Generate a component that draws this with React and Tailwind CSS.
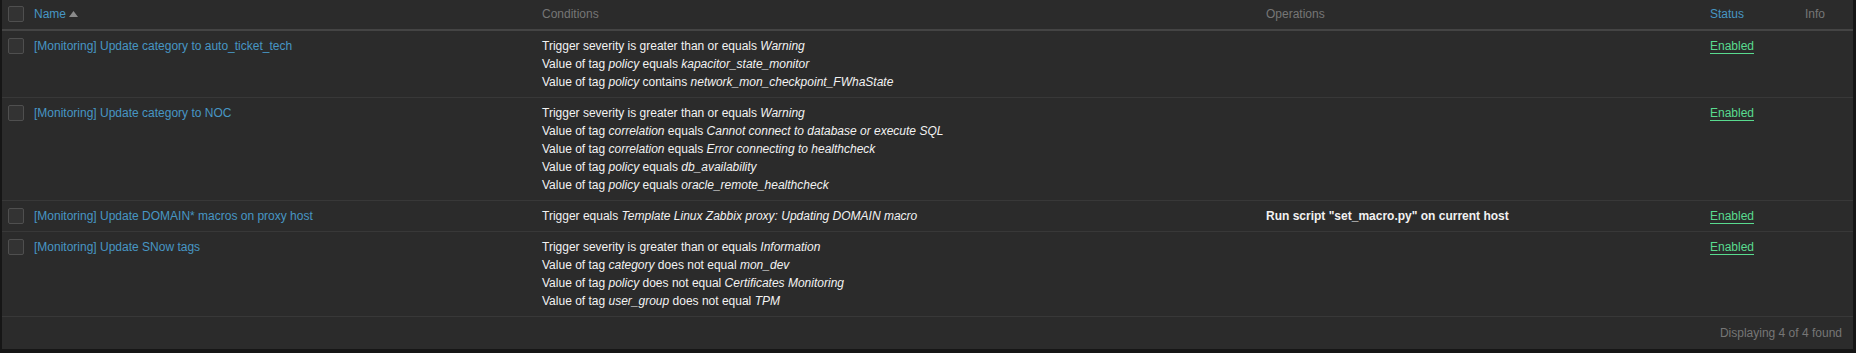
import clsx from 'clsx'

const ROWS = [
  {
    name: '[Monitoring] Update category to auto_ticket_tech',
    conditions: [
      ['Trigger severity is greater than or equals ', <i key="a">Warning</i>],
      ['Value of tag ', <i key="a">policy</i>, ' equals ', <i key="b">kapacitor_state_monitor</i>],
      ['Value of tag ', <i key="a">policy</i>, ' contains ', <i key="b">network_mon_checkpoint_FWhaState</i>],
    ],
    operations: null,
  },
  {
    name: '[Monitoring] Update category to NOC',
    conditions: [
      ['Trigger severity is greater than or equals ', <i key="a">Warning</i>],
      ['Value of tag ', <i key="a">correlation</i>, ' equals ', <i key="b">Cannot connect to database or execute SQL</i>],
      ['Value of tag ', <i key="a">correlation</i>, ' equals ', <i key="b">Error connecting to healthcheck</i>],
      ['Value of tag ', <i key="a">policy</i>, ' equals ', <i key="b">db_availability</i>],
      ['Value of tag ', <i key="a">policy</i>, ' equals ', <i key="b">oracle_remote_healthcheck</i>],
    ],
    operations: null,
  },
  {
    name: '[Monitoring] Update DOMAIN* macros on proxy host',
    conditions: [
      ['Trigger equals ', <i key="a">Template Linux Zabbix proxy: Updating DOMAIN macro</i>],
    ],
    operations: 'Run script "set_macro.py" on current host',
  },
  {
    name: '[Monitoring] Update SNow tags',
    conditions: [
      ['Trigger severity is greater than or equals ', <i key="a">Information</i>],
      ['Value of tag ', <i key="a">category</i>, ' does not equal ', <i key="b">mon_dev</i>],
      ['Value of tag ', <i key="a">policy</i>, ' does not equal ', <i key="b">Certificates Monitoring</i>],
      ['Value of tag ', <i key="a">user_group</i>, ' does not equal ', <i key="b">TPM</i>],
    ],
    operations: null,
  },
]

function Checkbox() {
  return <span className="inline-block align-top mt-[1px] w-4 h-4 rounded-[2px] border border-[#4f4f4f] bg-[#333333]" />
}

function SortArrow() {
  return (
    <svg width="9" height="6" viewBox="0 0 9 6" className="inline-block ml-[3px] mb-[2px]">
      <path d="M0 6 L4.5 0 L9 6 Z" fill="#8a8a8a" />
    </svg>
  )
}

export default function App() {
  const th = 'text-left font-normal pl-[5px] pt-[5px] pb-[6px] align-top'
  const td = 'pl-[5px] pt-[6px] pb-[6px] align-top'

  return (
    <div
      className="w-[1856px] h-[353px] bg-[#161616] text-[12px] leading-[18px] text-[#f2f2f2]"
      style={{ fontFamily: '"Liberation Sans", Arial, sans-serif' }}
    >
      <div className="ml-[2px] w-[1851px] h-[349px] bg-[#2b2b2b]">
        <table className="w-[1851px] table-fixed border-collapse">
          <colgroup>
            <col className="w-[27px]" />
            <col className="w-[508px]" />
            <col className="w-[724px]" />
            <col className="w-[444px]" />
            <col className="w-[95px]" />
            <col className="w-[53px]" />
          </colgroup>
          <thead>
            <tr className="border-b-2 border-[#444444]">
              <th className="pl-[6px] pt-[5px] pb-[6px] align-top text-left"><Checkbox /></th>
              <th className={clsx(th, 'text-[#4796c4]')}>Name<SortArrow /></th>
              <th className={clsx(th, 'text-[#767676]')}>Conditions</th>
              <th className={clsx(th, 'text-[#767676]')}>Operations</th>
              <th className={clsx(th, 'text-[#4796c4]')}>Status</th>
              <th className={clsx(th, 'text-[#767676]')}>Info</th>
            </tr>
          </thead>
          <tbody>
            {ROWS.map((row) => (
              <tr key={row.name} className="border-b border-[#383838]">
                <td className="pl-[6px] pt-[6px] pb-[6px] align-top"><Checkbox /></td>
                <td className={clsx(td, 'text-[#4796c4]')}>{row.name}</td>
                <td className={td}>
                  {row.conditions.map((line, i) => (
                    <div key={i}>{line}</div>
                  ))}
                </td>
                <td className={clsx(td, 'font-bold')}>{row.operations}</td>
                <td className={td}>
                  <span className="text-[#59db8f] border-b border-[#59db8f]">Enabled</span>
                </td>
                <td className={td}></td>
              </tr>
            ))}
          </tbody>
        </table>
        <div className="text-right pr-[11px] pt-[7px] pb-[7px] text-[#767676]">Displaying 4 of 4 found</div>
      </div>
    </div>
  )
}
